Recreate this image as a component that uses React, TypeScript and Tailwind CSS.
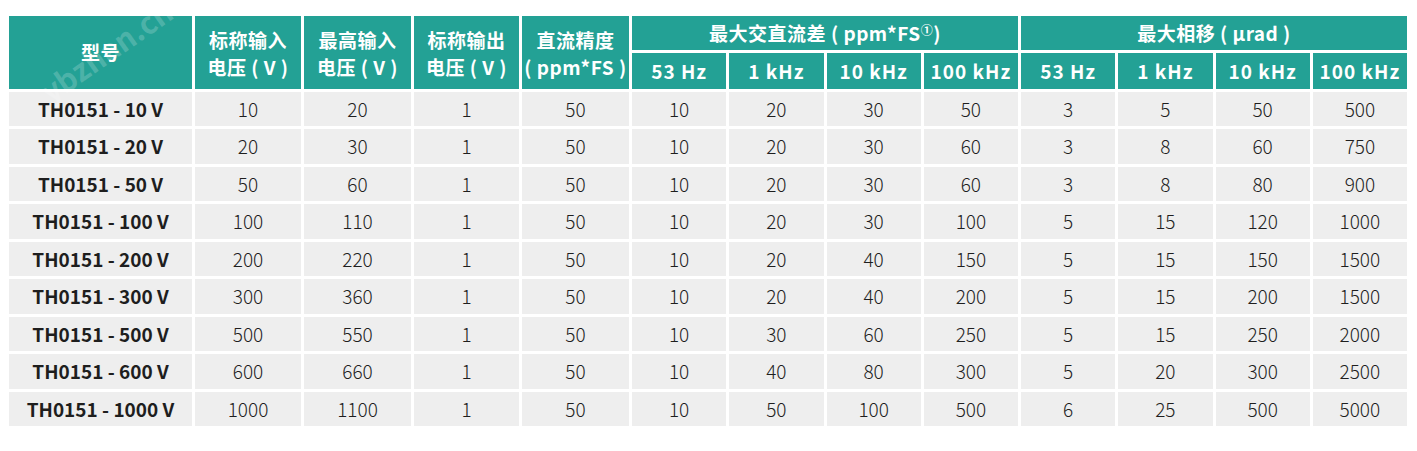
import React from "react";

const rows = [
  ["TH0151 - 10 V", "10", "20", "1", "50", "10", "20", "30", "50", "3", "5", "50", "500"],
  ["TH0151 - 20 V", "20", "30", "1", "50", "10", "20", "30", "60", "3", "8", "60", "750"],
  ["TH0151 - 50 V", "50", "60", "1", "50", "10", "20", "30", "60", "3", "8", "80", "900"],
  ["TH0151 - 100 V", "100", "110", "1", "50", "10", "20", "30", "100", "5", "15", "120", "1000"],
  ["TH0151 - 200 V", "200", "220", "1", "50", "10", "20", "40", "150", "5", "15", "150", "1500"],
  ["TH0151 - 300 V", "300", "360", "1", "50", "10", "20", "40", "200", "5", "15", "200", "1500"],
  ["TH0151 - 500 V", "500", "550", "1", "50", "10", "30", "60", "250", "5", "15", "250", "2000"],
  ["TH0151 - 600 V", "600", "660", "1", "50", "10", "40", "80", "300", "5", "20", "300", "2500"],
  ["TH0151 - 1000 V", "1000", "1100", "1", "50", "10", "50", "100", "500", "6", "25", "500", "5000"],
];

const freqs = ["53 Hz", "1 kHz", "10 kHz", "100 kHz", "53 Hz", "1 kHz", "10 kHz", "100 kHz"];

const head = "flex items-center justify-center bg-[#23a195] text-center font-bold text-white text-[19px] tracking-[0.5px] whitespace-nowrap";

function TwoLine({ a, b }: { a: string; b: string }) {
  return (
    <div className={`${head} row-span-2 flex-col leading-[27px]`}>
      <span>{a}</span>
      <span>{b}</span>
    </div>
  );
}

export default function App() {
  return (
    <div className="relative h-[451px] w-[1417px] overflow-hidden bg-white" style={{ fontFamily: '"Noto Sans CJK SC", "Noto Sans", sans-serif' }}>
      <div className="ml-[9px] mt-[16px] grid h-[410px] w-[1398px] grid-cols-[183px_106px_107px_105px_107px_repeat(8,1fr)] grid-rows-[34px_36px_repeat(9,1fr)] gap-[3px]">
        <div className={`${head} row-span-2`}>型号</div>
        <TwoLine a="标称输入" b="电压 ( V )" />
        <TwoLine a="最高输入" b="电压 ( V )" />
        <TwoLine a="标称输出" b="电压 ( V )" />
        <TwoLine a="直流精度" b="( ppm*FS )" />
        <div className={`${head} col-span-4`}>
          最大交直流差 ( ppm*FS <sup className="relative -top-[3px] text-[12px] font-bold">①</sup> )
        </div>
        <div className={`${head} col-span-4`}>最大相移 ( μrad )</div>
        {freqs.map((f, i) => (
          <div key={i} className={`${head} tracking-[1px]`}>{f}</div>
        ))}
        {rows.map((r) =>
          r.map((c, j) => (
            <div
              key={r[0] + j}
              className={`flex items-center justify-center whitespace-nowrap bg-[#eeeeee] text-[#1e1e1e] ${j === 0 ? "text-[19px] font-bold" : "text-[19px] font-light"}`}
            >
              {c}
            </div>
          ))
        )}
      </div>
      <div className="pointer-events-none absolute left-[30px] top-[28px] -rotate-[35deg] text-[30px] font-bold text-white/20">ybzhan.cn</div>
    </div>
  );
}
